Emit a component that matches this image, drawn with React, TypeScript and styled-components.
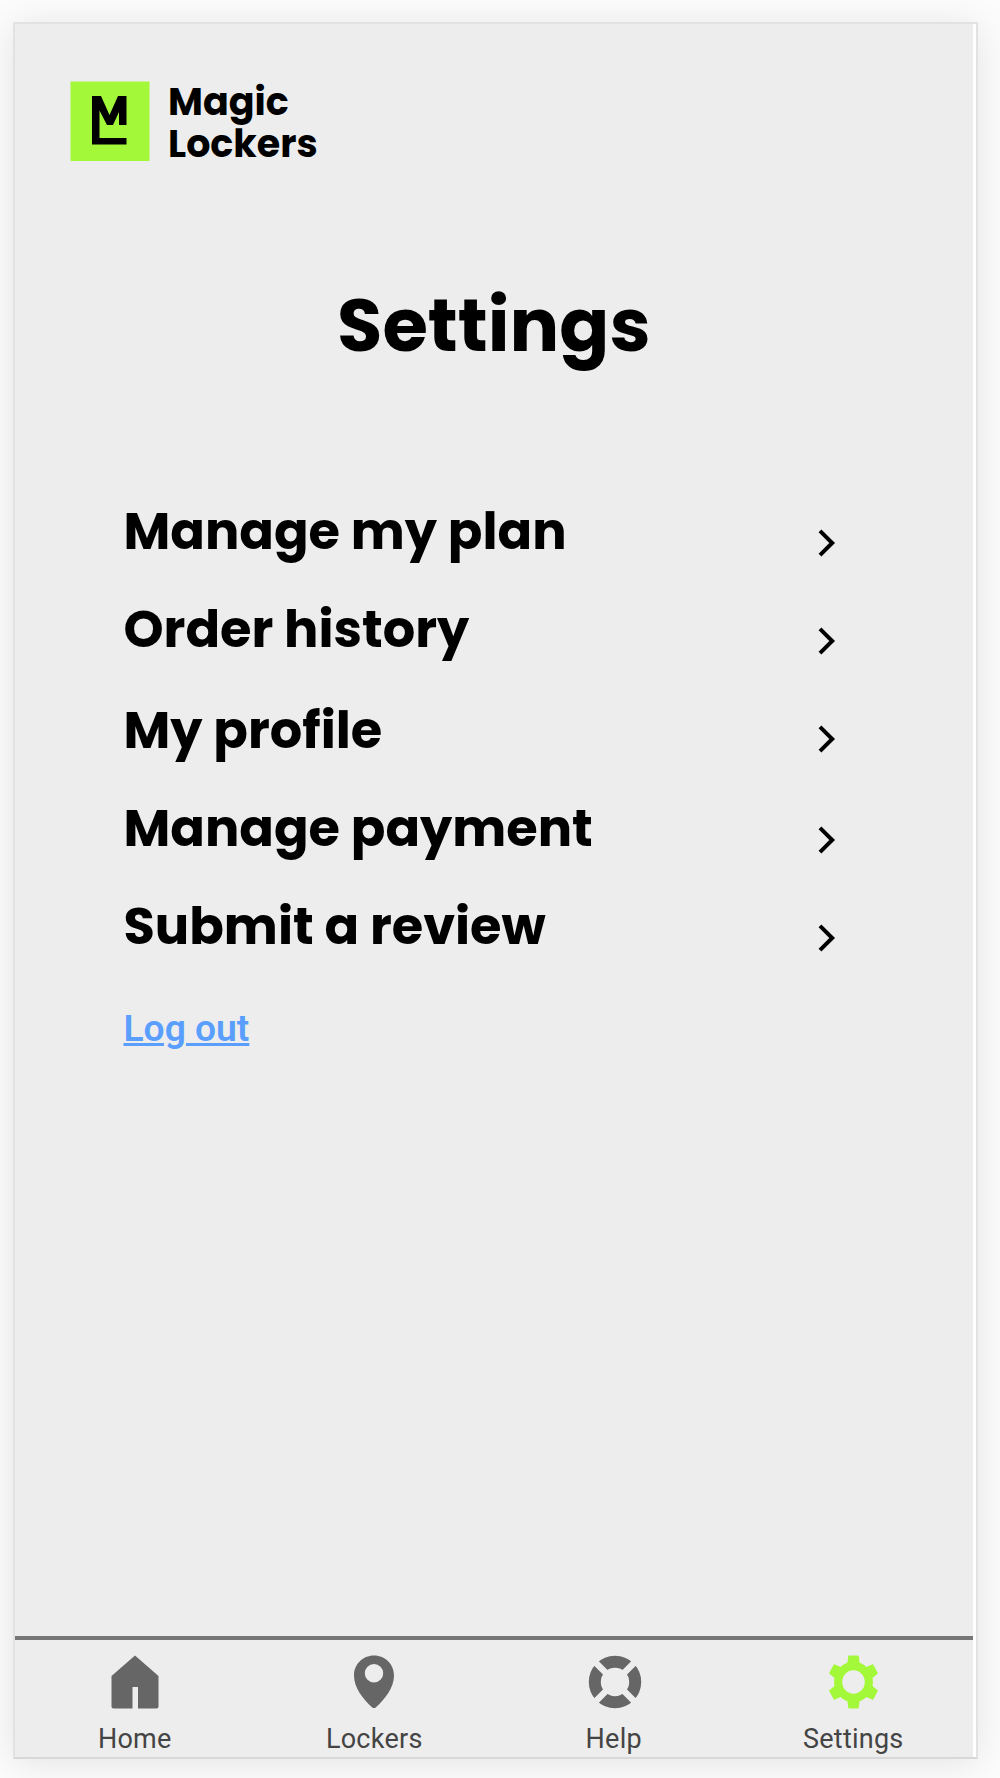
import React from "react";
import styled, { createGlobalStyle } from "styled-components";

const display = `Poppins, Inter, "Open Sans", sans-serif`;

const GlobalStyle = createGlobalStyle`
  * { box-sizing: border-box; }
  body {
    margin: 0;
    background: #fcfcfc;
    font-family: Roboto, "Open Sans", sans-serif;
  }
`;

const Page = styled.div`
  height: 1778px;
  padding: 22px 22px 19px 13px;
  overflow: hidden;
`;

const Frame = styled.div`
  height: 1737px;
  border: 2px solid #e2e2e2;
  border-bottom-color: #d8d8d8;
  background: #fff;
  padding-right: 3px;
  box-shadow: 0 4px 36px rgba(0, 0, 0, 0.1);
`;

const Screen = styled.main`
  height: 100%;
  display: flex;
  flex-direction: column;
  background: #ededed;
  color: #000;
`;

const Brand = styled.header`
  display: flex;
  gap: 18px;
  height: 141px;
  padding: 57px 0 0 55px;
`;

const BrandName = styled.div`
  font: 700 38px/42px ${display};
`;

const Line = styled.span`
  display: block;
  white-space: nowrap;
`;

const Title = styled.h1`
  margin: 116px 0 0 322px;
  font: 700 73.8px/90px ${display};
`;

const Menu = styled.nav`
  display: flex;
  flex-direction: column;
  padding: 130px 133px 0 108.5px;
`;

const MenuRow = styled.a<{ $height: number }>`
  display: flex;
  align-items: flex-start;
  justify-content: space-between;
  height: ${(p) => p.$height}px;
  font: 700 51px/60px ${display};
`;

const Chevron = styled.svg<{ $top: number }>`
  width: 24px;
  height: 32px;
  margin-top: ${(p) => p.$top}px;
`;

const LogOut = styled.a`
  align-self: flex-start;
  margin: 12px 0 0 108.5px;
  font: 600 37.2px/44px Roboto, sans-serif;
  color: #5a9fff;
  text-decoration: underline;
  text-decoration-thickness: 2.5px;
`;

const TabBar = styled.nav`
  display: grid;
  grid-template-columns: repeat(4, 1fr);
  height: 121px;
  margin-top: auto;
  border-top: 4px solid #777;
`;

const Tab = styled.a<{ $active?: boolean }>`
  display: flex;
  flex-direction: column;
  align-items: center;
  padding-top: 14px;
  font: 400 27px/32px Roboto, sans-serif;
  letter-spacing: 0.25px;
  color: #444;
  svg {
    width: 56px;
    height: 56px;
    margin-bottom: 13px;
    color: ${(p) => (p.$active ? "#a4f83a" : "#666")};
  }
`;

const rows = [
  { label: "Manage my plan", height: 98, chevron: 26 },
  { label: "Order history", height: 101, chevron: 26 },
  { label: "My profile", height: 98, chevron: 23 },
  { label: "Manage payment", height: 98, chevron: 26 },
  { label: "Submit a review", height: 98, chevron: 26 },
];

const HomeIcon = () => (
  <svg viewBox="0 0 56 56" fill="currentColor">
    <path d="M28 1.5 51.5 22v30.5a2 2 0 0 1-2 2H31V33h-5.500v21.500H6.500a2 2 0 0 1-2-2V22z" />
  </svg>
);

const PinIcon = () => (
  <svg viewBox="0 0 56 56" fill="currentColor" fillRule="evenodd">
    <path d="M28 1.500C16.500 1.500 8 10.500 8 21.500 8 34 17.500 45.500 26 53.200q2 1.800 4 0C38.500 45.500 48 34 48 21.500 48 10.500 39.500 1.500 28 1.500zM28 10a9.200 9.200 0 1 1 0 18.400A9.200 9.200 0 0 1 28 10z" />
  </svg>
);

const HelpIcon = () => (
  <svg viewBox="0 0 56 56" fill="none">
    <circle cx="29" cy="28" r="20.200" stroke="currentColor" strokeWidth="12" />
    <path d="M8 7l42 42M50 7l-42 42" stroke="#ededed" strokeWidth="6.500" />
  </svg>
);

const GearIcon = () => (
  <svg viewBox="0 0 56 56" fill="currentColor">
    <g transform="translate(28.500 28) scale(0.960 1) translate(-28 -28)">
      {[0, 60, 120].map((a) => (
        <path
          key={a}
          d="M22.500 2.500q0-1 1-1h9q1 0 1 1l1.200 9h-13.400zM22.500 53.500q0 1 1 1h9q1 0 1-1l1.200-9h-13.400z"
          transform={`rotate(${a} 28 28)`}
        />
      ))}
      <circle cx="28" cy="28" r="16" fill="none" stroke="currentColor" strokeWidth="8.500" />
    </g>
  </svg>
);

const tabs = [
  { label: "Home", Icon: HomeIcon },
  { label: "Lockers", Icon: PinIcon },
  { label: "Help", Icon: HelpIcon },
  { label: "Settings", Icon: GearIcon, active: true },
];

export default function App() {
  return (
    <Page>
      <GlobalStyle />
      <Frame>
        <Screen>
          <Brand>
            <svg width="80" height="80" viewBox="0 0 80 80">
              <path fill="#a4f83a" d="M.5.5H79.500V80H.5z" />
              <path d="M22 15h9l8.500 19L48 15h8.500v29h-7.500V31l-6 13h-6L29.500 29.500V57h27v6.500H22z" />
            </svg>
            <BrandName>
              <Line>Magic</Line>
              <Line>Lockers</Line>
            </BrandName>
          </Brand>
          <Title>Settings</Title>
          <Menu>
            {rows.map((r) => (
              <MenuRow key={r.label} $height={r.height}>
                <Line>{r.label}</Line>
                <Chevron $top={r.chevron} viewBox="0 0 24 32" fill="none" stroke="#000" strokeWidth="4">
                  <path d="M4 3.800 16.200 16 4 28.200" />
                </Chevron>
              </MenuRow>
            ))}
          </Menu>
          <LogOut>Log out</LogOut>
          <TabBar>
            {tabs.map(({ label, Icon, active }) => (
              <Tab key={label} $active={active}>
                <Icon />
                {label}
              </Tab>
            ))}
          </TabBar>
        </Screen>
      </Frame>
    </Page>
  );
}
